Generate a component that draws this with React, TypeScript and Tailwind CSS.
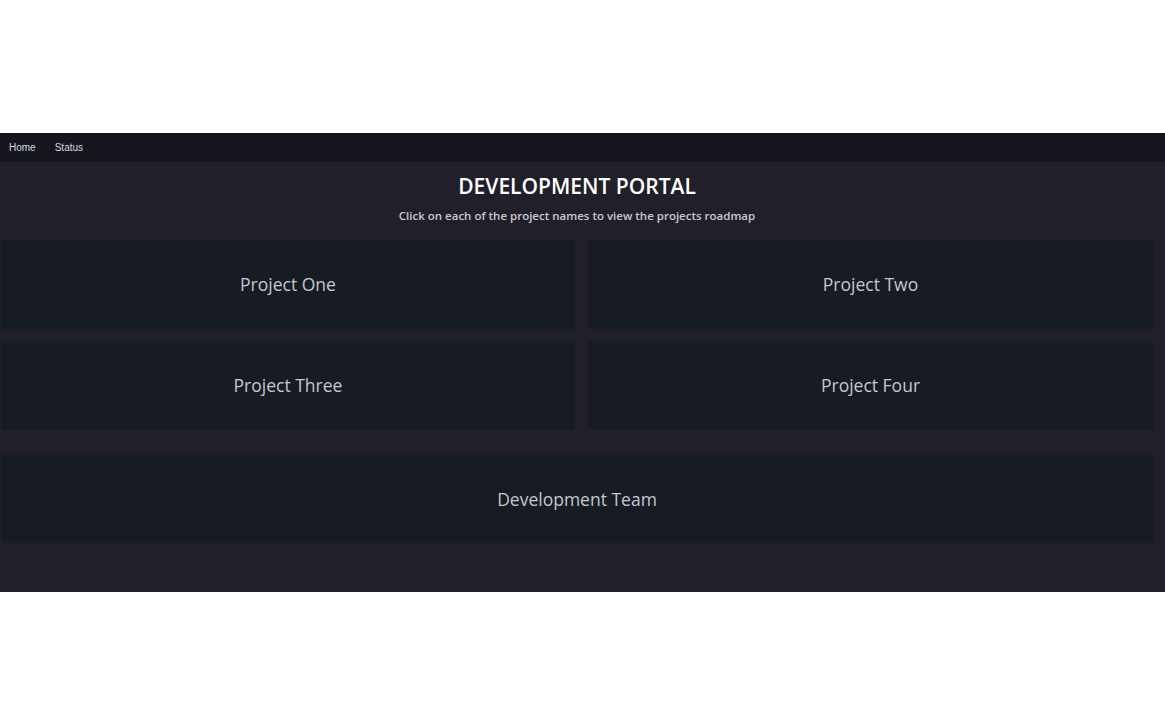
import React from "react";

export default function App() {
  const projects = ["Project One", "Project Two", "Project Three", "Project Four"];

  return (
    <div className="min-h-[725px] bg-white pt-[133px] font-['Open_Sans',sans-serif]">
      {/* Top nav */}
      <nav className="h-[29px] bg-[#16161e] flex items-center gap-[19px] pl-[9px] text-[10px] text-[#d6d6dc] font-['Liberation_Sans',sans-serif]">
        <a href="#">Home</a>
        <a href="#">Status</a>
      </nav>

      {/* Portal body */}
      <main className="bg-[#21202a] pl-[1px] pr-[12px] pb-[49px]">
        <div className="text-center pt-[10px] pb-[16px]">
          <h1 className="text-[21px] leading-[28px] font-semibold text-white">DEVELOPMENT PORTAL</h1>
          <p className="mt-[8px] text-[11.5px] leading-[16px] font-semibold text-[#c9c9d0]">
            Click on each of the project names to view the projects roadmap
          </p>
        </div>

        <div className="grid grid-cols-[574fr_565fr] gap-x-[13px] gap-y-[12px]">
          {projects.map((name) => (
            <a
              key={name}
              href="#"
              className="h-[89px] bg-[#171b24] flex items-center justify-center text-[17.5px] text-[#c5c7cd]"
            >
              {name}
            </a>
          ))}
        </div>

        <a
          href="#"
          className="mt-[25px] h-[88px] bg-[#171b24] flex items-center justify-center text-[17.5px] text-[#c5c7cd]"
        >
          Development Team
        </a>
      </main>
    </div>
  );
}
